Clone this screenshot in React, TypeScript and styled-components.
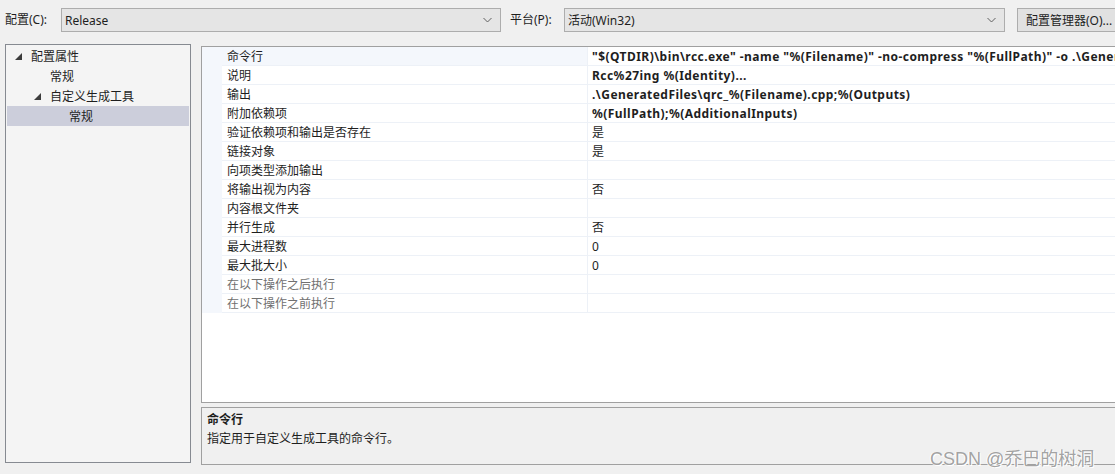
import styled, { createGlobalStyle } from "styled-components";

const GlobalStyle = createGlobalStyle`
	html, body {
		margin: 0;
		padding: 0;
		overflow: hidden;
		background: #f0f0f0;
	}
	body {
		font-family: "Noto Sans", "Noto Sans CJK SC", sans-serif;
		font-size: 12px;
		color: #1e1e1e;
	}
`;

const Page = styled.div`
	position: relative;
	width: 1130px;
	height: 474px;
`;

const Toolbar = styled.div`
	display: flex;
	align-items: center;
	height: 40px;
	padding-left: 5px;
`;

const FieldLabel = styled.span<{ $width: number; $indent?: number }>`
	box-sizing: border-box;
	width: ${(p) => p.$width}px;
	padding-left: ${(p) => p.$indent ?? 0}px;
	flex-shrink: 0;
	line-height: 16px;
`;

const Combo = styled.div<{ $width: number }>`
	display: flex;
	align-items: center;
	justify-content: space-between;
	box-sizing: border-box;
	width: ${(p) => p.$width}px;
	height: 24px;
	padding: 0 8px 0 3px;
	background: #e5e5e5;
	border: 1px solid #adadad;
	flex-shrink: 0;
`;

const Chevron = styled.svg`
	width: 9px;
	height: 6px;
`;

const ManagerButton = styled.div`
	display: flex;
	align-items: center;
	box-sizing: border-box;
	margin-left: 12px;
	width: 112px;
	height: 24px;
	padding-left: 8px;
	background: #e1e1e1;
	border: 1px solid #adadad;
	flex-shrink: 0;
	white-space: nowrap;
`;

const Body = styled.div`
	display: flex;
	gap: 10px;
	padding: 4px 0 0 5px;
`;

const Tree = styled.div`
	box-sizing: border-box;
	width: 186px;
	height: 419px;
	padding: 1px;
	background: #f4f4f4;
	border: 1px solid #868a91;
	flex-shrink: 0;
`;

const TreeItem = styled.div<{ $depth: number; $selected?: boolean }>`
	display: flex;
	align-items: center;
	height: 20px;
	padding-left: ${(p) => 8 + p.$depth * 19}px;
	background: ${(p) => (p.$selected ? "#cccedb" : "transparent")};
	white-space: nowrap;
`;

const Expander = styled.svg`
	width: 7px;
	height: 7px;
	margin-right: 9px;
	flex-shrink: 0;
`;

const ExpanderSpace = styled.span`
	width: 16px;
	flex-shrink: 0;
`;

const RightColumn = styled.div`
	display: flex;
	flex-direction: column;
	gap: 4px;
	flex: 1;
	padding-top: 2px;
`;

const Grid = styled.div`
	box-sizing: border-box;
	height: 357px;
	background: #fff;
	border: 1px solid #a0a0a0;
`;

const GridRow = styled.div`
	display: grid;
	grid-template-columns: 20px 365px 1fr;
	height: 19px;
`;

const Gutter = styled.div`
	background: #f4f7fc;
`;

const LabelCell = styled.div<{ $selected?: boolean; $disabled?: boolean }>`
	box-sizing: border-box;
	padding: 2px 0 0 5px;
	line-height: 16px;
	white-space: nowrap;
	overflow: hidden;
	color: ${(p) => (p.$disabled ? "#707070" : "#1e1e1e")};
	background: ${(p) => (p.$selected ? "#f4f7fc" : "#fff")};
	border-bottom: 1px solid #edf1f7;
`;

const ValueCell = styled.div<{ $bold?: boolean }>`
	box-sizing: border-box;
	padding: 2px 0 0 4px;
	line-height: 16px;
	white-space: nowrap;
	overflow: hidden;
	font-weight: ${(p) => (p.$bold ? 700 : 400)};
	letter-spacing: ${(p) => (p.$bold ? "0.45px" : "0")};
	border-left: 1px solid #edf1f7;
	border-bottom: 1px solid #edf1f7;
`;

const Description = styled.div`
	box-sizing: border-box;
	height: 58px;
	padding: 2px 5px;
	background: #f0f0f0;
	border: 1px solid #a0a0a0;
	line-height: 19px;
`;

const DescTitle = styled.div`
	font-weight: 700;
`;

const Watermark = styled.div`
	position: absolute;
	left: 930px;
	top: 444px;
	font-family: "Liberation Sans", "Noto Sans CJK SC", sans-serif;
	font-size: 18px;
	color: #a3a3a3;
	text-shadow: 1px 1px 0 #fff, -1px 0 0 #fff;
	white-space: nowrap;
`;

type Prop = {
	label: string;
	value: string;
	bold?: boolean;
	disabled?: boolean;
};

const props: Prop[] = [
	{
		label: "命令行",
		value:
			'"$(QTDIR)\\bin\\rcc.exe" -name "%(Filename)" -no-compress "%(FullPath)" -o .\\GeneratedFiles\\qrc_%(Filename).cpp',
		bold: true,
	},
	{ label: "说明", value: "Rcc%27ing %(Identity)...", bold: true },
	{ label: "输出", value: ".\\GeneratedFiles\\qrc_%(Filename).cpp;%(Outputs)", bold: true },
	{ label: "附加依赖项", value: "%(FullPath);%(AdditionalInputs)", bold: true },
	{ label: "验证依赖项和输出是否存在", value: "是" },
	{ label: "链接对象", value: "是" },
	{ label: "向项类型添加输出", value: "" },
	{ label: "将输出视为内容", value: "否" },
	{ label: "内容根文件夹", value: "" },
	{ label: "并行生成", value: "否" },
	{ label: "最大进程数", value: "0" },
	{ label: "最大批大小", value: "0" },
	{ label: "在以下操作之后执行", value: "", disabled: true },
	{ label: "在以下操作之前执行", value: "", disabled: true },
];

function ComboChevron() {
	return (
		<Chevron viewBox="0 0 9 6">
			<path d="M0.5 1 L4.5 5 L8.5 1" fill="none" stroke="#606060" strokeWidth="1" />
		</Chevron>
	);
}

function Triangle() {
	return (
		<Expander viewBox="0 0 7 7">
			<path d="M7 0 L7 7 L0 7 Z" fill="#3c3c3c" />
		</Expander>
	);
}

export default function App() {
	return (
		<Page>
			<GlobalStyle />
			<Toolbar>
				<FieldLabel $width={56}>配置(C):</FieldLabel>
				<Combo $width={440}>
					<span>Release</span>
					<ComboChevron />
				</Combo>
				<FieldLabel $width={63} $indent={9}>
					平台(P):
				</FieldLabel>
				<Combo $width={441}>
					<span>活动(Win32)</span>
					<ComboChevron />
				</Combo>
				<ManagerButton>配置管理器(O)...</ManagerButton>
			</Toolbar>
			<Body>
				<Tree>
					<TreeItem $depth={0}>
						<Triangle />
						配置属性
					</TreeItem>
					<TreeItem $depth={1}>
						<ExpanderSpace />
						常规
					</TreeItem>
					<TreeItem $depth={1}>
						<Triangle />
						自定义生成工具
					</TreeItem>
					<TreeItem $depth={2} $selected>
						<ExpanderSpace />
						常规
					</TreeItem>
				</Tree>
				<RightColumn>
					<Grid>
						{props.map((p, i) => (
							<GridRow key={p.label}>
								<Gutter />
								<LabelCell $selected={i === 0} $disabled={p.disabled}>
									{p.label}
								</LabelCell>
								<ValueCell $bold={p.bold}>{p.value}</ValueCell>
							</GridRow>
						))}
					</Grid>
					<Description>
						<DescTitle>命令行</DescTitle>
						<div>指定用于自定义生成工具的命令行。</div>
					</Description>
				</RightColumn>
			</Body>
			<Watermark>CSDN @乔巴的树洞</Watermark>
		</Page>
	);
}
